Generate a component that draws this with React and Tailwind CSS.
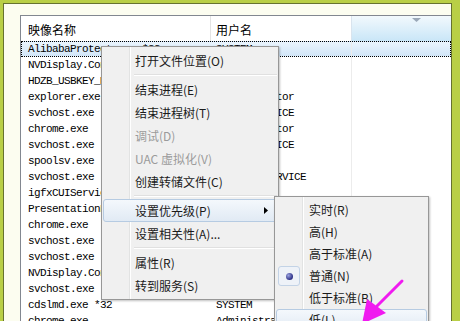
import React from 'react';

const rows = [
  ['AlibabaProtect.exe *32', 'SYSTEM'],
  ['NVDisplay.Container.exe', 'SYSTEM'],
  ['HDZB_USBKEY_MONITOR.exe *32', 'SYSTEM'],
  ['explorer.exe', 'Administrator'],
  ['svchost.exe', 'LOCAL SERVICE'],
  ['chrome.exe', 'Administrator'],
  ['svchost.exe', 'LOCAL SERVICE'],
  ['spoolsv.exe', 'SYSTEM'],
  ['svchost.exe', 'NETWORK SERVICE'],
  ['igfxCUIService.exe', 'SYSTEM'],
  ['PresentationFontCache.exe', 'LOCAL SERVICE'],
  ['chrome.exe', 'Administrator'],
  ['svchost.exe', 'SYSTEM'],
  ['svchost.exe', 'SYSTEM'],
  ['NVDisplay.Container.exe', 'SYSTEM'],
  ['svchost.exe', 'SYSTEM'],
  ['cdslmd.exe *32', 'SYSTEM'],
  ['chrome.exe', 'Administrator'],
];

const mainMenu = [
  { label: '打开文件位置(O)' },
  { sep: true },
  { label: '结束进程(E)' },
  { label: '结束进程树(T)' },
  { label: '调试(D)', disabled: true },
  { label: 'UAC 虚拟化(V)', disabled: true },
  { label: '创建转储文件(C)' },
  { sep: true },
  { label: '设置优先级(P)', hot: true, sub: true },
  { label: '设置相关性(A)...' },
  { sep: true },
  { label: '属性(R)' },
  { label: '转到服务(S)' },
];

const priorities = [
  { label: '实时(R)' },
  { label: '高(H)' },
  { label: '高于标准(A)' },
  { label: '普通(N)', checked: true },
  { label: '低于标准(B)' },
  { label: '低(L)', hot: true },
];

function MainMenu() {
  return (
    <div className="absolute left-[97px] top-[42px] w-[178px] border border-[#979797] bg-[#f0f0f0] py-[2px] shadow-[1px_1px_2px_rgba(0,0,0,0.25)] font-['Noto_Sans_CJK_SC',sans-serif] text-[12px] text-[#1b1b1b]">
      <div className="absolute left-[27px] top-0 bottom-0 w-px bg-[#e2e3e3]" />
      <div className="absolute left-[28px] top-0 bottom-0 w-px bg-white" />
      {mainMenu.map((m, i) =>
        m.sep ? (
          <div key={i} className="relative h-[6px] mx-[1px] pl-[31px] flex flex-col justify-center">
            <div className="h-px bg-[#e0e0e0]" />
            <div className="h-px bg-white" />
          </div>
        ) : (
          <div
            key={i}
            className={
              'relative h-[23px] mx-[1px] pl-[31px] pr-[8px] flex items-center rounded-[3px] border ' +
              (m.hot ? 'border-[#b6cbe2] bg-gradient-to-b from-[#f4f8fc] to-[#e1eaf4]' : 'border-transparent') +
              (m.disabled ? ' text-[#9b9b9b]' : '')
            }
          >
            <span className="leading-none">{m.label}</span>
            {m.sub && (
              <svg className="ml-auto" width="4" height="7" viewBox="0 0 4 7">
                <path d="M0 0 L4 3.5 L0 7 Z" fill="#000" />
              </svg>
            )}
          </div>
        )
      )}
    </div>
  );
}

function PriorityMenu() {
  return (
    <div className="absolute left-[270px] top-[192px] w-[155px] h-[140px] border border-[#979797] bg-[#f0f0f0] py-[2px] shadow-[1px_1px_2px_rgba(0,0,0,0.25)] font-['Noto_Sans_CJK_SC',sans-serif] text-[12px] text-[#1b1b1b]">
      <div className="absolute left-[27px] top-0 bottom-0 w-px bg-[#e2e3e3]" />
      <div className="absolute left-[28px] top-0 bottom-0 w-px bg-white" />
      {priorities.map((m, i) => (
        <div
          key={i}
          className={
            'relative h-[22px] mx-[1px] pl-[1px] flex items-center rounded-[3px] border ' +
            (m.hot ? 'border-[#b6cbe2] bg-gradient-to-b from-[#f4f8fc] to-[#e1eaf4]' : 'border-transparent')
          }
        >
          <div
            className={
              'w-[22px] h-[20px] flex items-center justify-center rounded-[3px] ' +
              (m.checked ? 'border border-[#c3d3e6] bg-[#eef2f8]' : '')
            }
          >
            {m.checked && (
              <div className="w-[7px] h-[7px] rounded-full bg-[radial-gradient(circle_at_35%_35%,#9aa3e0,#2c2f86_70%)]" />
            )}
          </div>
          <span className="ml-[9px] leading-none">{m.label}</span>
        </div>
      ))}
    </div>
  );
}

export default function App() {
  return (
    <div className="relative w-[460px] h-[321px] overflow-hidden bg-[#b9cf46] pl-[3px] pt-[3px] pr-[8px]">
      <div className="relative h-full bg-[#fcfdf0] border-l border-t border-r border-[#66722f] pl-4 pt-[11px]">
        <div className="h-full border-l border-t border-[#828790] bg-white">
          <div className="flex h-[25px] font-['Noto_Sans_CJK_SC',sans-serif] text-[12px] text-black">
            <div className="w-[190px] shrink-0 border-r border-[#e3e3e3] pl-[7px] pt-[3px] flex items-center">映像名称</div>
            <div className="w-[141px] shrink-0 border-r border-[#d9e4ee] pl-[5px] pt-[3px] flex items-center">用户名</div>
            <div className="flex-1 relative bg-gradient-to-b from-[#f2f9fd] to-[#c9e6f7]">
              <svg className="absolute left-[60px] top-[2px]" width="9" height="5" viewBox="0 0 9 5">
                <path d="M0 0 L9 0 L4.5 4 Z" fill="#9aa8b8" />
              </svg>
            </div>
          </div>
          <div className="font-['Liberation_Mono',monospace] text-[11px] tracking-[-0.6px] text-black">
            {rows.map(([name, user], i) => (
              <div
                key={i}
                className={
                  'flex h-4 ' +
                  (i === 0 ? 'border border-dotted border-black bg-gradient-to-b from-[#eaf4fd] to-[#d2e6f8]' : '')
                }
              >
                <div className={(i === 0 ? 'w-[189px] pl-[6px]' : 'w-[190px] pl-[7px]') + ' shrink-0 overflow-hidden whitespace-nowrap flex items-center'}>
                  {name}
                </div>
                <div className="w-[141px] shrink-0 pl-[5px] overflow-hidden whitespace-nowrap flex items-center border-r border-[#ececec]">
                  {user}
                </div>
                <div className="flex-1" />
              </div>
            ))}
          </div>
        </div>
        <MainMenu />
        <PriorityMenu />
      </div>
      <svg className="absolute left-0 top-0 pointer-events-none" width="460" height="321" viewBox="0 0 460 321">
        <line x1="402" y1="281" x2="377" y2="306" stroke="#f01af0" strokeWidth="3" strokeLinecap="round" />
        <polygon points="367,299 386,313 362,324" fill="#f01af0" />
      </svg>
    </div>
  );
}
